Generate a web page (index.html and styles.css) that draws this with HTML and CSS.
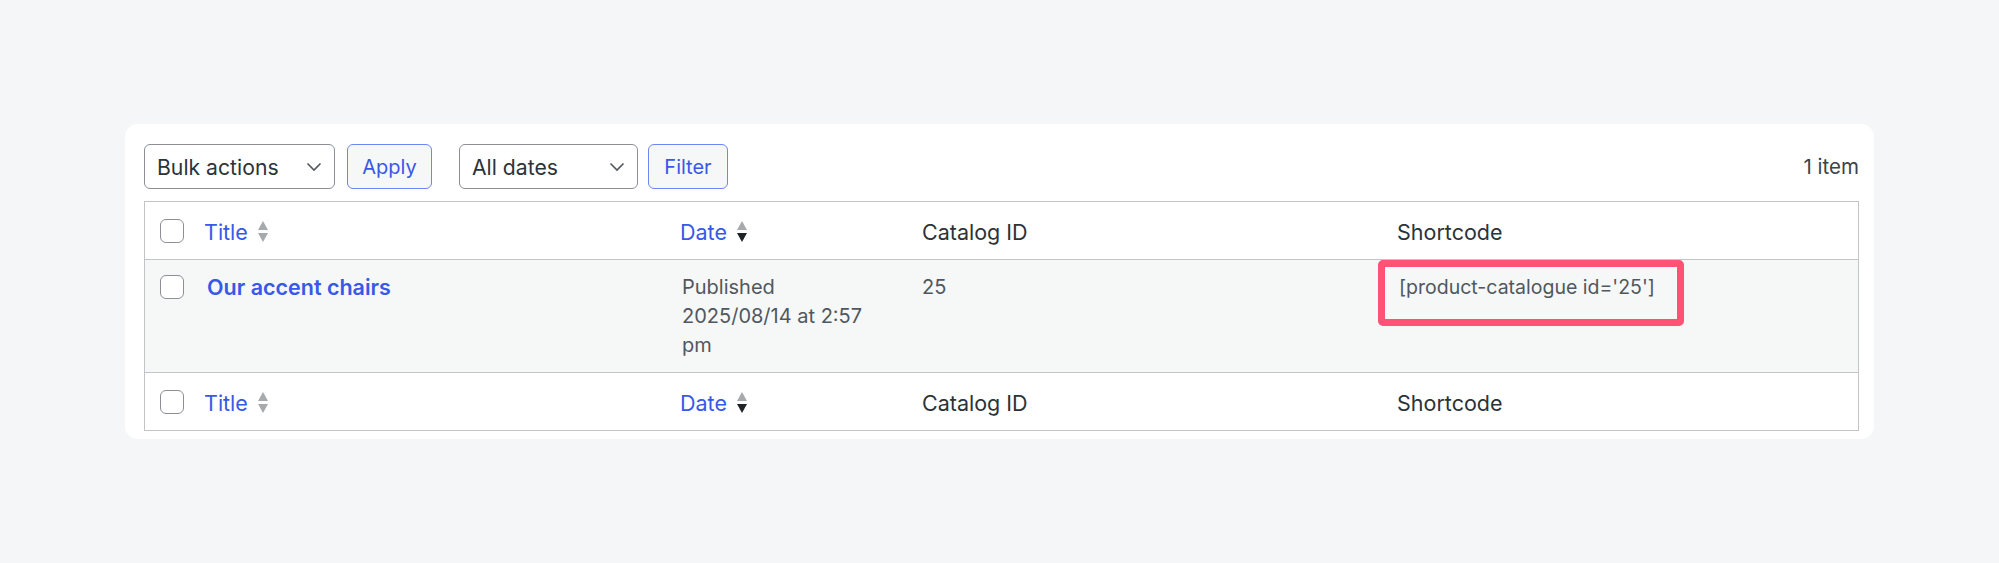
FILE: index.html
```html
<!DOCTYPE html>
<html lang="en">
<head>
<meta charset="utf-8">
<title>Catalogues</title>
<link rel="stylesheet" href="styles.css">
</head>
<body>
<div class="card">
  <div class="toolbar">
    <div class="select sel-bulk"><span>Bulk actions</span><svg class="chev" viewBox="0 0 16 10" width="16" height="10"><path d="M1.5 1.5 L8 8 L14.5 1.5" fill="none" stroke="#50575e" stroke-width="1.6"/></svg></div>
    <button class="btn btn-apply">Apply</button>
    <div class="select sel-dates"><span>All dates</span><svg class="chev" viewBox="0 0 16 10" width="16" height="10"><path d="M1.5 1.5 L8 8 L14.5 1.5" fill="none" stroke="#50575e" stroke-width="1.6"/></svg></div>
    <button class="btn btn-filter">Filter</button>
    <div class="count">1 item</div>
  </div>
  <div class="table">
    <div class="row head">
      <div class="cell cb"><span class="box"></span></div>
      <div class="cell hc"><a class="sort">Title</a><span class="arrows"><i class="up"></i><i class="down"></i></span></div>
      <div class="cell hc"><a class="sort">Date</a><span class="arrows"><i class="up"></i><i class="down active"></i></span></div>
      <div class="cell th">Catalog ID</div>
      <div class="cell th">Shortcode</div>
    </div>
    <div class="row body">
      <div class="cell cb"><span class="box"></span></div>
      <div class="cell title-cell"><a class="rtitle">Our accent chairs</a></div>
      <div class="cell date-cell">Published<br>2025/08/14 at 2:57<br>pm</div>
      <div class="cell">25</div>
      <div class="cell sc-cell">[product-catalogue id='25']<span class="highlight"></span></div>
    </div>
    <div class="row head foot">
      <div class="cell cb"><span class="box"></span></div>
      <div class="cell hc"><a class="sort">Title</a><span class="arrows"><i class="up"></i><i class="down"></i></span></div>
      <div class="cell hc"><a class="sort">Date</a><span class="arrows"><i class="up"></i><i class="down active"></i></span></div>
      <div class="cell th">Catalog ID</div>
      <div class="cell th">Shortcode</div>
    </div>
  </div>
</div>
</body>
</html>
```
FILE: styles.css
```css
html, body {
  margin: 0;
  padding: 0;
}
body {
  background: #f5f6f7;
  font-family: Inter, "Liberation Sans", sans-serif;
  color: #50575e;
  width: 1999px;
  height: 563px;
  overflow: hidden;
}
.card {
  box-sizing: border-box;
  margin: 124px 0 0 125px;
  width: 1749px;
  height: 315px;
  background: #fff;
  border-radius: 13px;
  padding: 20px 15px 0 19px;
}
.toolbar {
  display: flex;
  align-items: center;
  height: 45px;
}
.select {
  box-sizing: border-box;
  height: 45px;
  border: 1.5px solid #8c8f94;
  border-radius: 6px;
  display: flex;
  align-items: center;
  justify-content: space-between;
  padding: 0 12px 0 12px;
  font-size: 21.2px;
  color: #2c3338;
  background: #fff;
}
.sel-bulk { width: 191px; }
.sel-dates { width: 179px; margin-left: 27px; }
.chev { display: block; }
.btn {
  box-sizing: border-box;
  height: 45px;
  border: 1.5px solid #6d87f2;
  border-radius: 6px;
  background: #f6f7f7;
  color: #3858e9;
  font-family: inherit;
  font-size: 20px;
  padding: 0;
}
.btn-apply { width: 85px; margin-left: 12px; }
.btn-filter { width: 80px; margin-left: 10px; }
.count {
  margin-left: auto;
  font-size: 20.5px;
  color: #3c434a;
}
.table {
  margin-top: 12px;
  width: 1715px;
  box-sizing: border-box;
  border: 1.5px solid #c3c4c7;
}
.row {
  display: grid;
  grid-template-columns: 59px 476px 242px 475px 1fr;
  font-size: 20px;
}
.head {
  height: 57px;
  align-items: center;
  background: #fff;
  font-size: 21.5px;
}
.head .cell { padding-top: 3px; }
.head .cb { padding-top: 0; }
.hc {
  display: flex;
  align-items: center;
}
.body {
  height: 114px;
  background: #f6f7f7;
  border-top: 1.5px solid #c3c4c7;
  border-bottom: 1.5px solid #c3c4c7;
  box-sizing: border-box;
  align-items: start;
  line-height: 29px;
}
.body .cell { padding-top: 13px; }
.cell { position: relative; }
.cb { padding-left: 15px; }
.body .cb { padding-top: 15px; }
.box {
  display: block;
  box-sizing: border-box;
  width: 24px;
  height: 24px;
  border: 1.5px solid #8c8f94;
  border-radius: 6px;
  background: #fff;
}
.sort {
  color: #3858e9;
  text-decoration: none;
}
.arrows {
  display: flex;
  flex-direction: column;
  gap: 3px;
  margin-left: 10px;
  margin-top: -2px;
}
.arrows i {
  display: block;
  width: 0;
  height: 0;
  border-left: 5.5px solid transparent;
  border-right: 5.5px solid transparent;
}
.arrows .up { border-bottom: 9px solid #a7aaad; }
.arrows .down { border-top: 9px solid #a7aaad; }
.arrows .down.active { border-top-color: #1d2327; }
.th { color: #2c3338; }
.title-cell { padding-left: 3px; }
.rtitle {
  color: #3858e9;
  font-weight: 600;
  font-size: 21.5px;
}
.date-cell { padding-left: 2px; }
.sc-cell { padding-left: 2px; font-size: 19.5px; }
.highlight {
  position: absolute;
  left: -19px;
  top: 0;
  width: 306px;
  height: 66px;
  box-sizing: border-box;
  border: 7px solid #ff5274;
  border-radius: 5px;
}
```
